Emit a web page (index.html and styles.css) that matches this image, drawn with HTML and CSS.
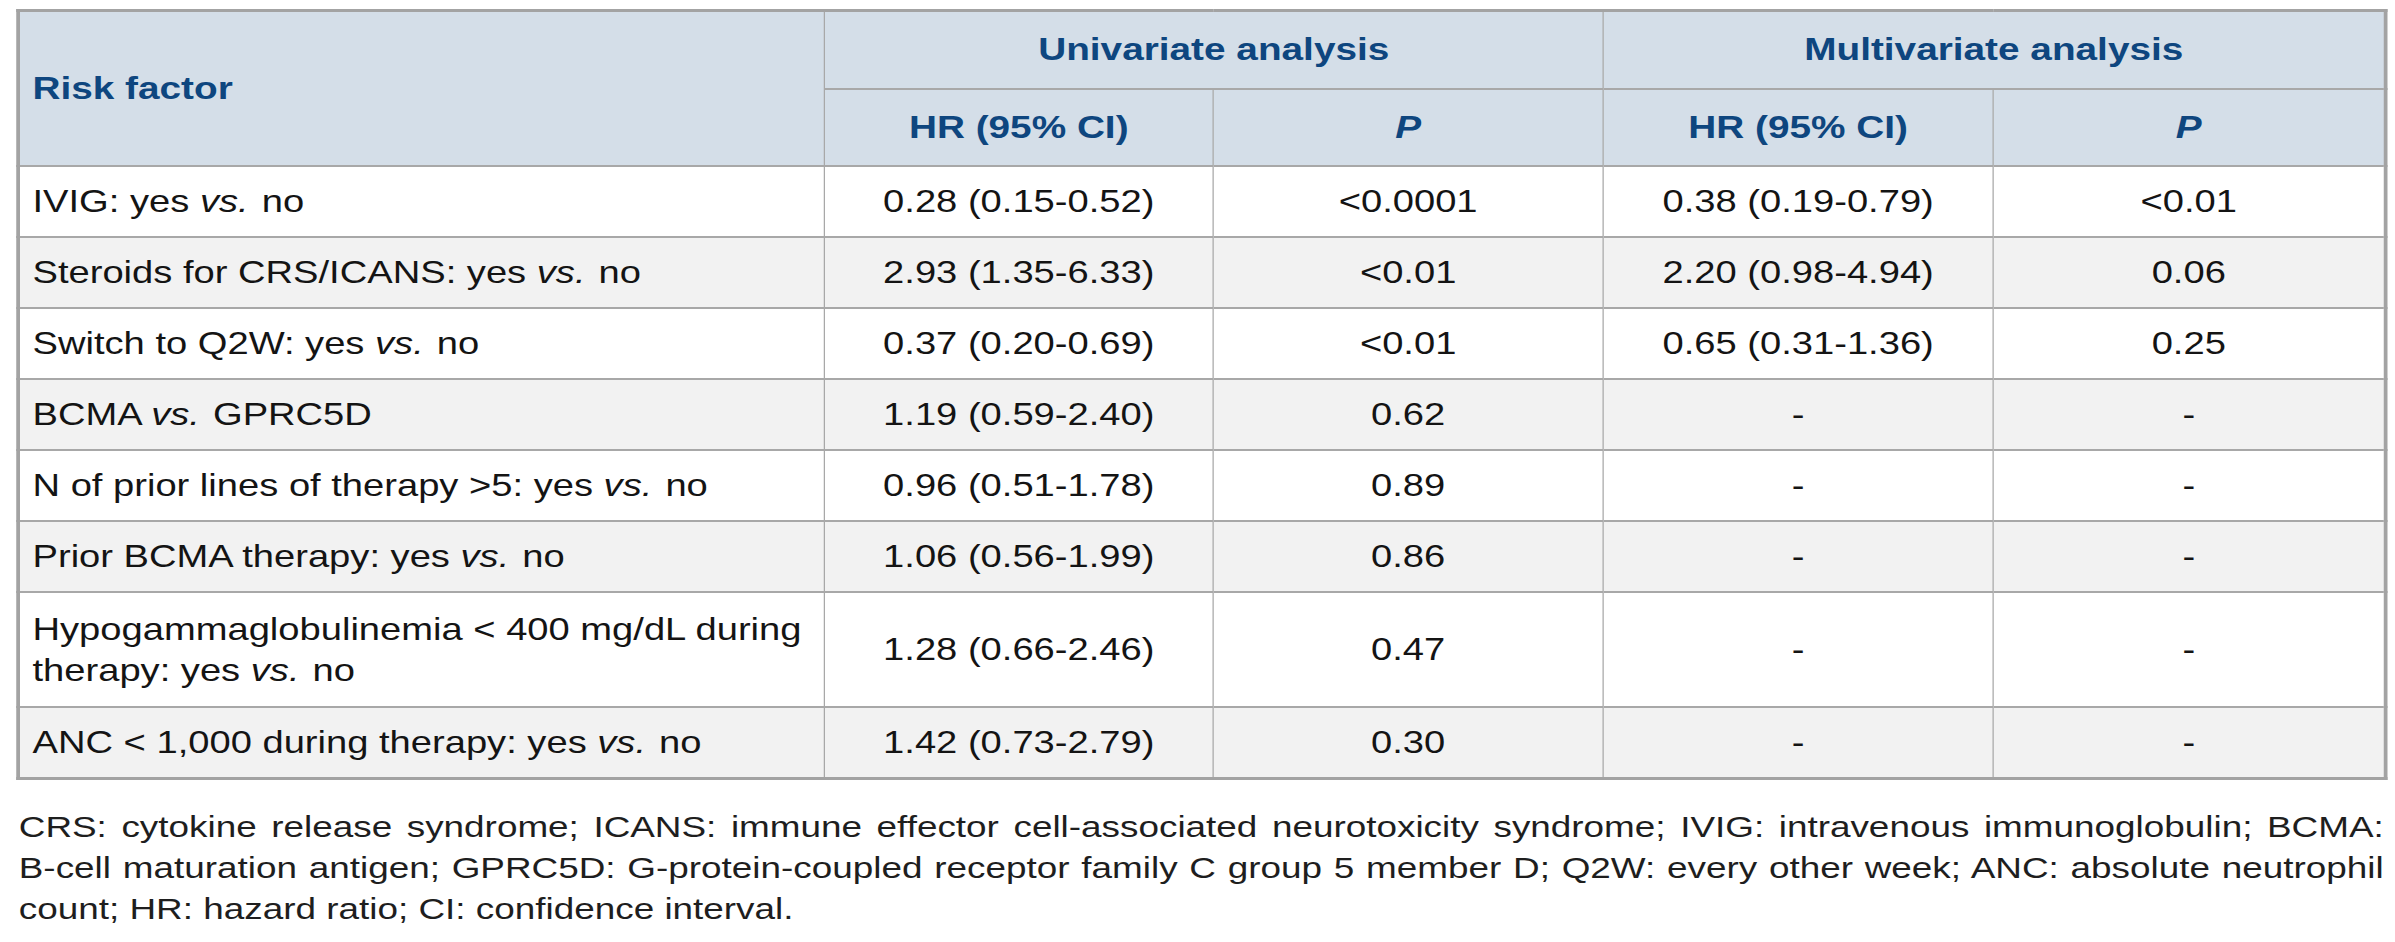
FILE: index.html
```html
<!DOCTYPE html>
<html lang="en">
<head>
<meta charset="utf-8">
<title>Risk factors</title>
<link rel="stylesheet" href="styles.css">
</head>
<body>
<div class="page">
  <table class="risk">
    <colgroup>
      <col class="c-factor">
      <col class="c-hr1">
      <col class="c-p1">
      <col class="c-hr2">
      <col class="c-p2">
    </colgroup>
    <thead>
      <tr class="h1">
        <th rowspan="2" class="left">Risk factor</th>
        <th colspan="2">Univariate analysis</th>
        <th colspan="2">Multivariate analysis</th>
      </tr>
      <tr class="h2">
        <th>HR (95% CI)</th>
        <th><i>P</i></th>
        <th>HR (95% CI)</th>
        <th><i>P</i></th>
      </tr>
    </thead>
    <tbody>
      <tr><td class="left">IVIG: yes <i>vs.</i> no</td><td>0.28 (0.15-0.52)</td><td>&lt;0.0001</td><td>0.38 (0.19-0.79)</td><td>&lt;0.01</td></tr>
      <tr><td class="left">Steroids for CRS/ICANS: yes <i>vs.</i> no</td><td>2.93 (1.35-6.33)</td><td>&lt;0.01</td><td>2.20 (0.98-4.94)</td><td>0.06</td></tr>
      <tr><td class="left">Switch to Q2W: yes <i>vs.</i> no</td><td>0.37 (0.20-0.69)</td><td>&lt;0.01</td><td>0.65 (0.31-1.36)</td><td>0.25</td></tr>
      <tr><td class="left">BCMA <i>vs.</i> GPRC5D</td><td>1.19 (0.59-2.40)</td><td>0.62</td><td>-</td><td>-</td></tr>
      <tr><td class="left">N of prior lines of therapy &gt;5: yes <i>vs.</i> no</td><td>0.96 (0.51-1.78)</td><td>0.89</td><td>-</td><td>-</td></tr>
      <tr><td class="left">Prior BCMA therapy: yes <i>vs.</i> no</td><td>1.06 (0.56-1.99)</td><td>0.86</td><td>-</td><td>-</td></tr>
      <tr class="tall"><td class="left">Hypogammaglobulinemia &lt; 400 mg/dL during therapy: yes <i>vs.</i> no</td><td>1.28 (0.66-2.46)</td><td>0.47</td><td>-</td><td>-</td></tr>
      <tr><td class="left">ANC &lt; 1,000 during therapy: yes <i>vs.</i> no</td><td>1.42 (0.73-2.79)</td><td>0.30</td><td>-</td><td>-</td></tr>
    </tbody>
  </table>
  <div class="note">
    <span class="line">CRS: cytokine release syndrome; ICANS: immune effector cell-associated neurotoxicity syndrome; IVIG: intravenous immunoglobulin; BCMA:</span>
    <span class="line">B-cell maturation antigen; GPRC5D: G-protein-coupled receptor family C group 5 member D; Q2W: every other week; ANC: absolute neutrophil</span>
    <span class="line last">count; HR: hazard ratio; CI: confidence interval.</span>
  </div>
</div>
</body>
</html>
```
FILE: styles.css
```css
html, body {
  margin: 0;
  padding: 0;
  background: #ffffff;
}
/* the reference is rendered horizontally stretched */
.page {
  box-sizing: border-box;
  width: 1916px;
  padding: 9px 0 0 13px;
  transform: scaleX(1.25);
  transform-origin: 0 0;
}
.risk {
  width: 1894px;
  border-collapse: collapse;
  table-layout: fixed;
  font-family: "Liberation Sans", Arial, sans-serif;
  color: #141414;
  border: 3px solid #a3a3a3;
}
.c-factor { width: 645px; }
.c-hr1 { width: 311px; }
.c-p1 { width: 312px; }
.c-hr2 { width: 312px; }
.c-p2 { width: 314px; }
.risk th, .risk td {
  border-top: 2px solid #a8a8a8;
  border-bottom: 2px solid #a8a8a8;
  border-left: 1.5px solid #a8a8a8;
  border-right: 1.5px solid #a8a8a8;
  text-align: center;
  vertical-align: middle;
  padding: 0 6px;
}
.risk thead th {
  background: #d4dee8;
  color: #0e467f;
  font-weight: bold;
  font-size: 31px;
}
.risk thead .h1 th { height: 76px; }
.risk thead .h2 th { height: 75px; }
.risk th.left, .risk td.left {
  text-align: left;
  padding-left: 10px;
  padding-right: 10px;
}
.risk td {
  font-size: 30.5px;
  height: 69px;
  line-height: 41px;
}
.risk td i { margin-right: 2px; }
.risk tbody tr:nth-child(even) td { background: #f2f2f2; }
.risk tbody tr.tall td { height: 113px; }
.note {
  margin-top: 26px;
  padding-left: 2px;
  width: 1892px;
  font-family: "Liberation Sans", Arial, sans-serif;
  font-size: 29.5px;
  line-height: 41px;
  color: #1e1e1e;
}
.note .line {
  display: block;
  text-align: justify;
  text-align-last: justify;
}
.note .line.last { text-align-last: left; }
```
